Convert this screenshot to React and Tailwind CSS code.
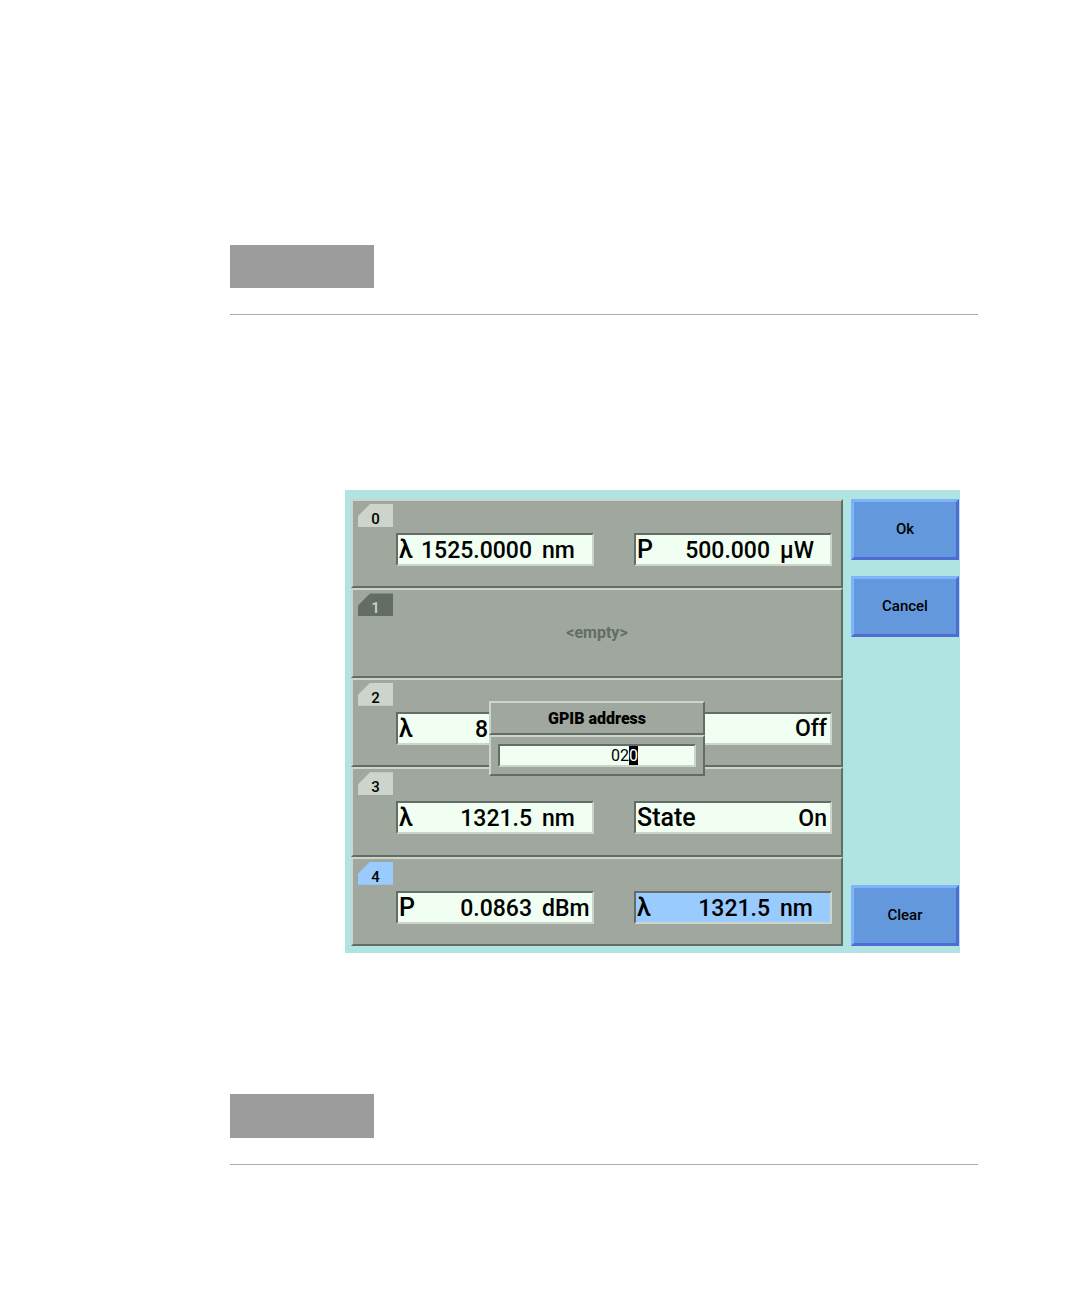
import { useEffect, useRef } from "react";

const slots = [
  {
    id: 0,
    fields: [
      { label: "λ", value: "1525.0000", unit: "nm" },
      { label: "P", value: "500.000", unit: "µW" },
    ],
  },
  { id: 1, fields: [] },
  {
    id: 2,
    fields: [
      { label: "λ", value: "8", covered: true },
      { label: "", value: "Off" },
    ],
  },
  {
    id: 3,
    fields: [
      { label: "λ", value: "1321.5", unit: "nm" },
      { label: "State", value: "On" },
    ],
  },
  {
    id: 4,
    active: true,
    fields: [
      { label: "P", value: "0.0863", unit: "dBm" },
      { label: "λ", value: "1321.5", unit: "nm", active: true },
    ],
  },
];

const raised =
  "border-2 border-t-[#cdd4cb] border-l-[#cdd4cb] border-r-[#636d65] border-b-[#636d65] bg-[#a0a79e]";
const sunken =
  "border-2 border-t-[#636d65] border-l-[#636d65] border-r-[#cdd4cb] border-b-[#cdd4cb]";

function Field({ field }) {
  return (
    <div
      className={`${sunken} ${field.active ? "bg-[#9acbff]" : "bg-[#f0fff2]"} flex h-[33px] items-baseline justify-between whitespace-nowrap pl-px text-[23px] leading-[30px] font-medium text-black`}
    >
      <span className="text-[25px]">{field.label}</span>
      {field.unit ? (
        <span className="flex">
          <span>{field.value}</span>
          <span className="ml-2.5 w-[50px]">{field.unit}</span>
        </span>
      ) : (
        <span className={field.covered ? "pr-[104px]" : "pr-[3px]"}>{field.value}</span>
      )}
    </div>
  );
}

function Slot({ slot }) {
  const empty = slot.fields.length === 0;
  const tab = slot.active
    ? "bg-[#9acbff] text-black"
    : empty
      ? "bg-[#636d65] text-[#cdd4cb]"
      : "bg-[#cdd4cb] text-black";
  return (
    <section className={`${raised} flex min-h-[89px] flex-1 gap-[3px] pl-[5px] pr-[9px]`}>
      <h2
        className={`${tab} mt-[3px] h-[23px] w-[35px] shrink-0 pt-[3px] text-center text-[15px] leading-6 font-medium [clip-path:polygon(12px_0,100%_0,100%_100%,0_100%,0_12px)]`}
      >
        {slot.id}
      </h2>
      {empty ? (
        <p className="flex flex-1 items-center justify-center pr-[34px] text-base font-bold text-[#636d65]">
          &lt;empty&gt;
        </p>
      ) : (
        <div className="grid flex-1 grid-cols-2 gap-10 pt-8">
          {slot.fields.map((field, i) => (
            <Field key={i} field={field} />
          ))}
        </div>
      )}
    </section>
  );
}

function AddressDialog() {
  const input = useRef(null);
  useEffect(() => {
    input.current.focus();
    input.current.setSelectionRange(2, 3);
  }, []);
  return (
    <div
      role="dialog"
      aria-label="GPIB address"
      className="absolute inset-x-0 top-[202px] mx-auto w-54 bg-[#a0a79e]"
    >
      <label
        htmlFor="gpib"
        className={`${raised} block h-[34px] text-center text-base leading-8 font-black text-black`}
      >
        GPIB address
      </label>
      <div className={`${raised} h-[41px] px-[7px] pt-[7px]`}>
        <input
          id="gpib"
          ref={input}
          defaultValue="020"
          className={`${sunken} block h-[23px] w-full bg-[#f0fff2] pr-14 text-right text-base leading-4 text-black outline-none selection:bg-black selection:text-white`}
        />
      </div>
    </div>
  );
}

function SoftKey({ children }) {
  return (
    <button
      type="button"
      className="h-[61px] w-full border-3 border-t-[#7db4fb] border-r-[#506cd4] border-b-[#506cd4] border-l-[#7db4fb] bg-[#6399dc] text-[15px] font-medium text-black"
    >
      {children}
    </button>
  );
}

export default function App() {
  return (
    <main className="min-h-screen bg-white pt-[245px] pr-[102px] pb-10 pl-[230px] font-['Roboto',sans-serif]">
      <div className="border-b border-[#aaaaaa] pb-[26px]">
        <div className="h-[43px] w-36 bg-[#9c9c9c]" />
      </div>

      <div className="mt-[175px] mr-[18px] ml-[115px] flex min-h-[463px] gap-2 bg-[#afe4e2] pt-[9px] pr-px pb-[7px] pl-1.5">
        <div className="relative flex flex-1 flex-col">
          {slots.map((slot) => (
            <Slot key={slot.id} slot={slot} />
          ))}
          <AddressDialog />
        </div>
        <div className="flex w-[108px] shrink-0 flex-col gap-4">
          <SoftKey>Ok</SoftKey>
          <SoftKey>Cancel</SoftKey>
          <div className="mt-auto">
            <SoftKey>Clear</SoftKey>
          </div>
        </div>
      </div>

      <div className="mt-[141px] border-b border-[#aaaaaa] pb-[26px]">
        <div className="h-11 w-36 bg-[#9c9c9c]" />
      </div>
    </main>
  );
}
